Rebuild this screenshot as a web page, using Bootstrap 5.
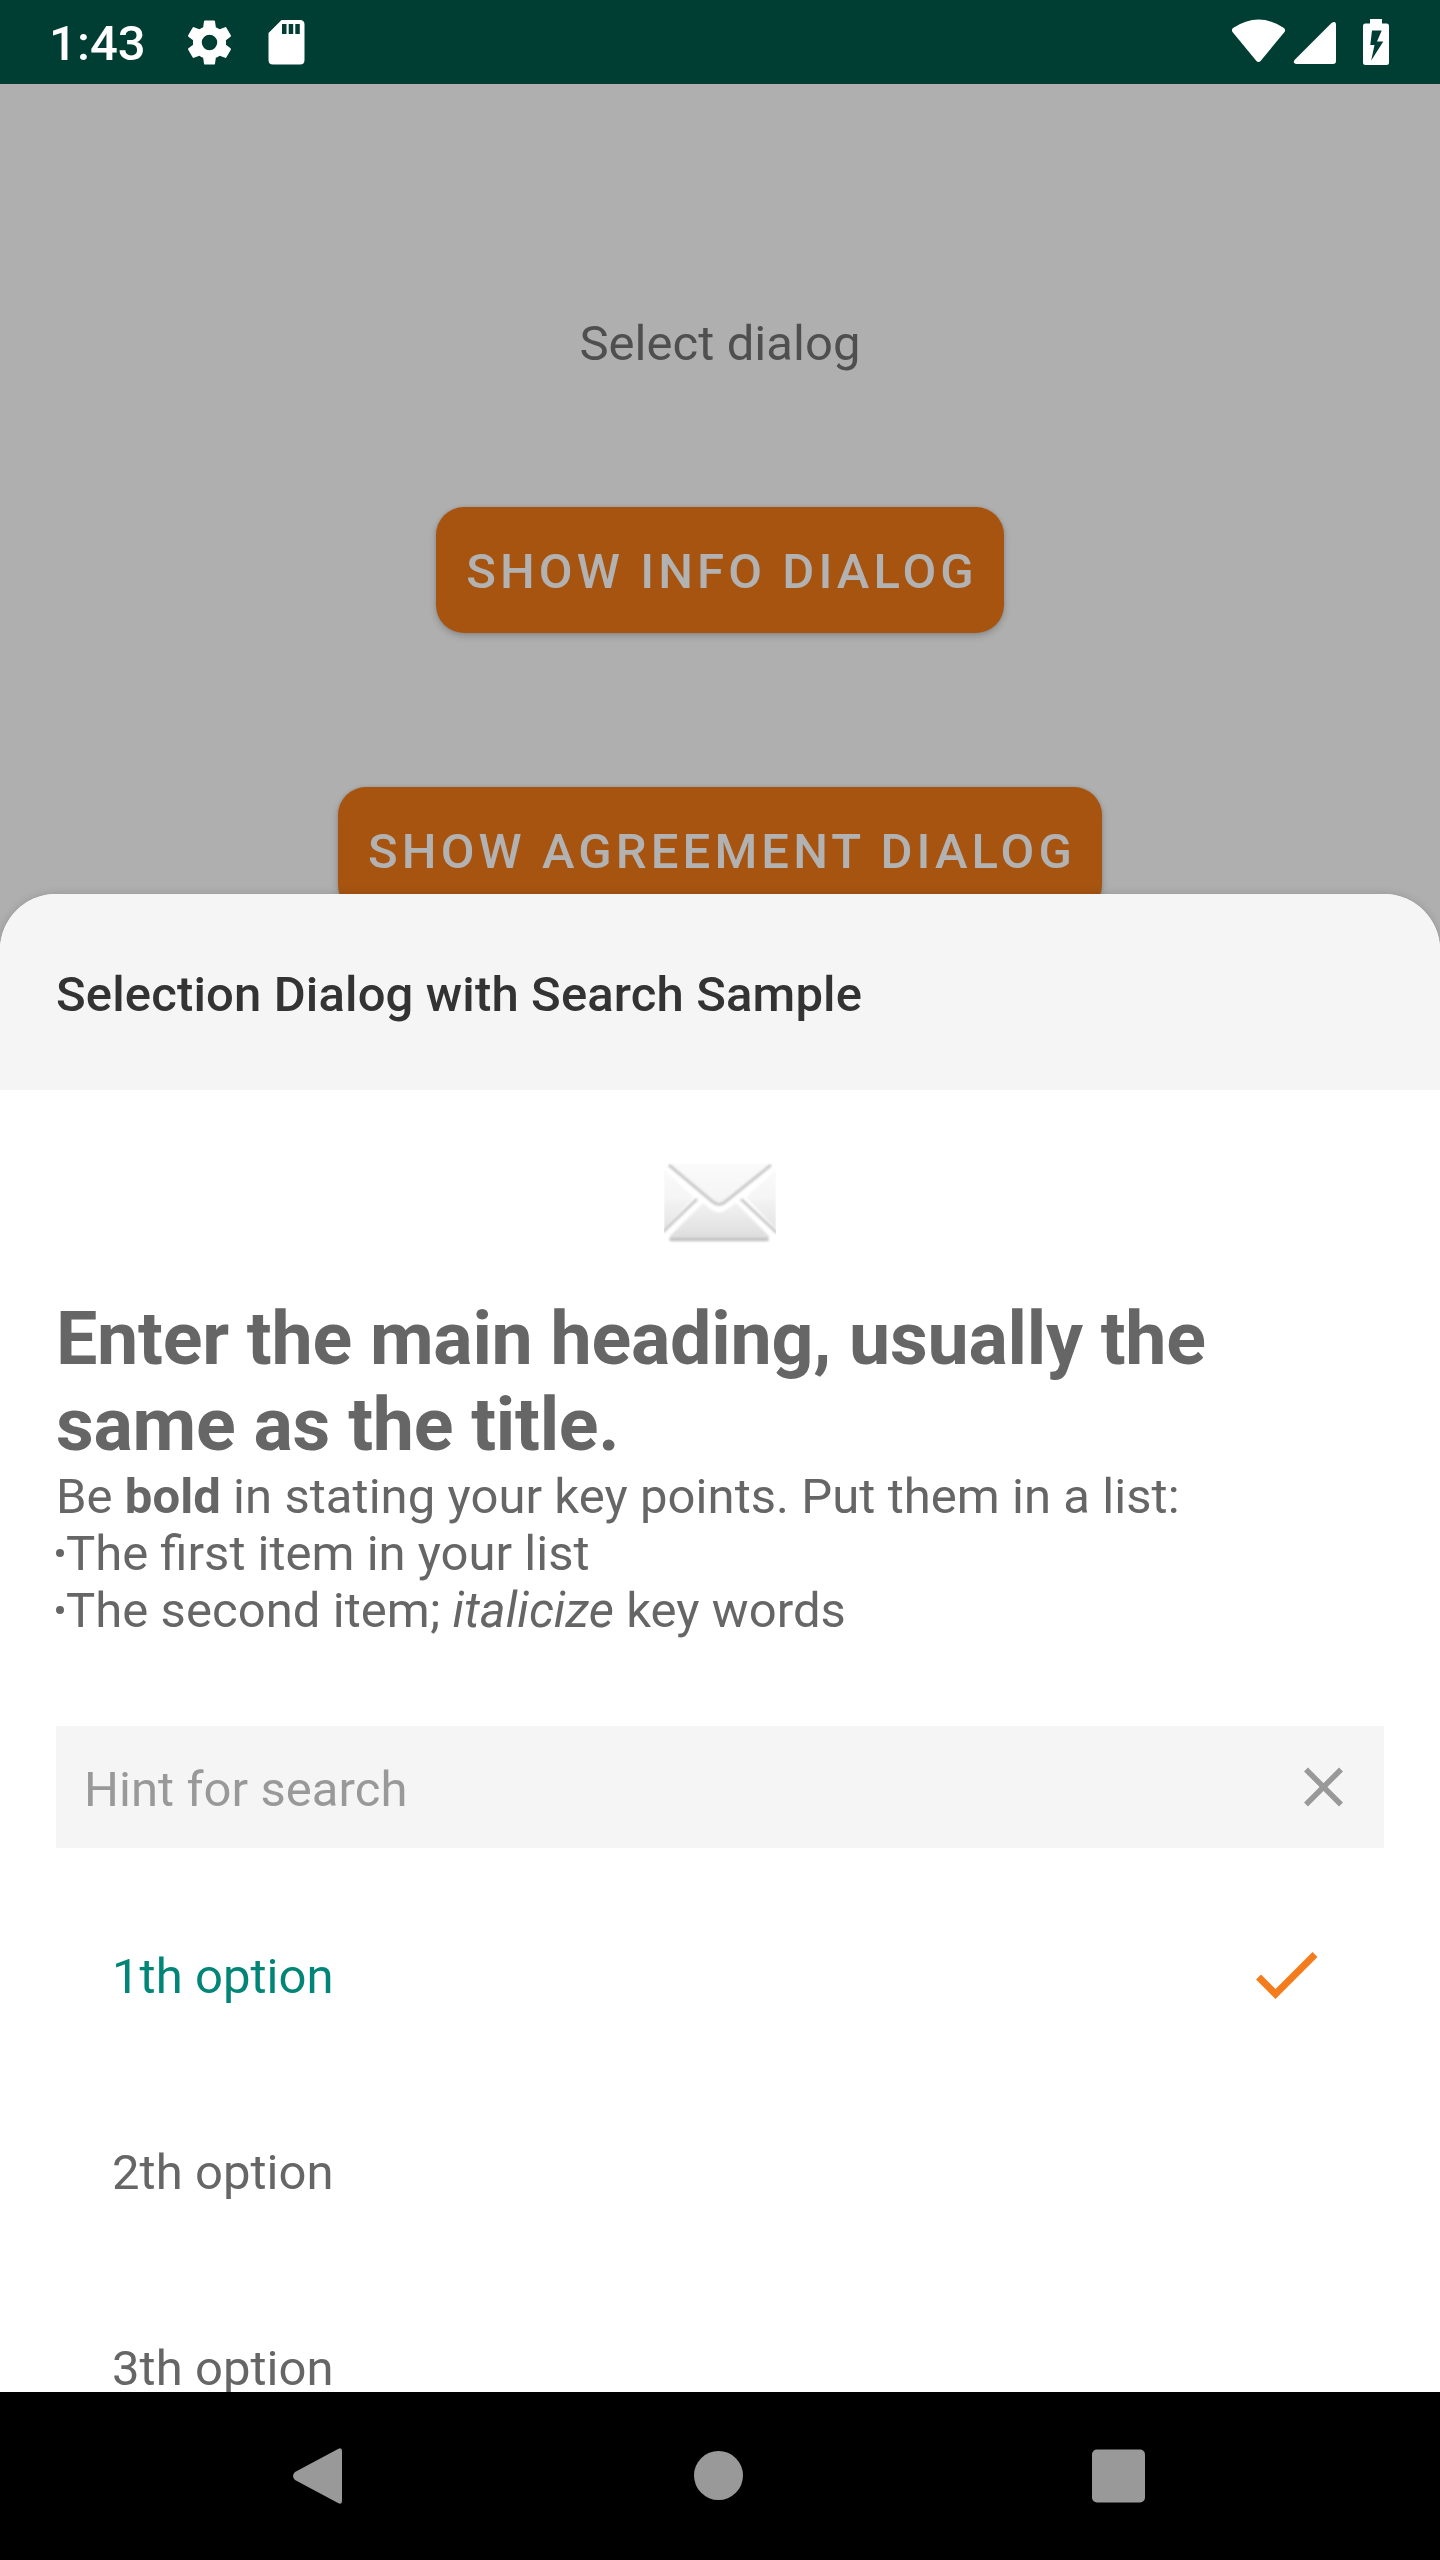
<!DOCTYPE html>
<html lang="en">
<head>
<meta charset="utf-8">
<meta name="viewport" content="width=device-width, initial-scale=1">
<title>Selection Dialog with Search Sample</title>
<link rel="stylesheet" href="https://cdn.jsdelivr.net/npm/bootstrap@5.3.0/dist/css/bootstrap.min.css">
<style>
  body { font-family: Roboto, "Liberation Sans", sans-serif; font-size: 49px; line-height: 57px; letter-spacing: .06px; color: #666; background: #afafaf; }
  svg { display: block; flex: none; }
  .screen { width: 1440px; height: 2560px; }
  .status-bar { height: 84px; background: #003d33; color: #fff; font-weight: 500; padding: 0 51px 0 49px; }
  .clock { padding-top: 3px; width: 134px; }
  .sd-icon { margin-left: 28px; }
  .backdrop-page { padding-top: 231px; color: #4f4f4f; gap: 135px; }
  .dimmed-actions { gap: 154px; }
  .btn-dim { --bs-btn-padding-y: 0; --bs-btn-font-size: 49px; --bs-btn-font-weight: 500; --bs-btn-line-height: 57px;
    --bs-btn-color: #b2b2b2; --bs-btn-bg: #a75411; --bs-btn-border-width: 0; --bs-btn-border-radius: 28px;
    height: 126px; padding: 3px 26px 0 30px; letter-spacing: 4.11px; box-shadow: 0 3px 7px rgba(0,0,0,.2), 0 0 3px rgba(0,0,0,.1); }
  .sheet { height: 1498px; bottom: 168px; border-radius: 56px 56px 0 0; box-shadow: 0 0 8px rgba(0,0,0,.15); }
  .sheet-title { height: 196px; padding: 4px 56px 0; background: #f5f5f5; color: #333; font-weight: 500; font-size: 49px; line-height: 57px; letter-spacing: .14px; }
  .sheet-body { padding: 71px 56px 0; }
  .message { margin-top: 51px; }
  .message h1 { font-size: 73.5px; line-height: 86px; font-weight: 700; letter-spacing: -.24px; }
  .ligatures { letter-spacing: normal; }
  .bullet-dot { display: inline-block; width: 8px; height: 8px; margin: 0 2px 13px 0; background: currentColor; vertical-align: baseline; }
  .search-box { margin-top: 87px; height: 122px; background: #f5f5f5; color: #999; padding: 4px 41px 0 28px; }
  .options { margin-top: 30px; --bs-list-group-color: #666; --bs-list-group-bg: #fff; --bs-list-group-border-width: 0; --bs-list-group-item-padding-x: 56px; --bs-list-group-item-padding-y: 0; }
  .options .list-group-item { height: 196px; padding-right: 66px; }
  .options .chosen { color: #018577; }
  .nav-keys { height: 168px; bottom: 0; padding: 0 295px 0 293px; }
</style>
</head>
<body>
<div class="screen position-relative overflow-hidden">
  <header class="status-bar d-flex align-items-center">
    <span class="clock">1:43</span>
    <svg width="53" height="53" viewBox="0 0 24 24" fill="#fff"><path d="M19.43 12.98c.04-.32.07-.64.07-.98s-.03-.66-.07-.98l2.11-1.65c.19-.15.24-.42.12-.64l-2-3.46c-.12-.22-.39-.3-.61-.22l-2.49 1c-.52-.4-1.08-.73-1.69-.98l-.38-2.65C14.46 2.18 14.25 2 14 2h-4c-.25 0-.46.18-.49.42l-.38 2.65c-.61.25-1.17.59-1.69.98l-2.49-1c-.23-.09-.49 0-.61.22l-2 3.46c-.13.22-.07.49.12.64l2.11 1.65c-.04.32-.07.65-.07.98s.03.66.07.98l-2.11 1.65c-.19.15-.24.42-.12.64l2 3.46c.12.22.39.3.61.22l2.49-1c.52.4 1.08.73 1.69.98l.38 2.65c.03.24.24.42.49.42h4c.25 0 .46-.18.49-.42l.38-2.65c.61-.25 1.17-.59 1.69-.98l2.49 1c.23.09.49 0 .61-.22l2-3.46c.12-.22.07-.49-.12-.64l-2.11-1.65zM12 15.500a3.500 3.500 0 1 1 0-7 3.500 3.500 0 0 1 0 7z"/></svg>
    <svg class="sd-icon" width="46" height="84" viewBox="264 0 46 84" fill="#fff"><path fill-rule="evenodd" d="M281.500 20H300q4.500 0 4.500 4.500V60q0 4.500-4.500 4.500H273q-4.500 0-4.500-4.500V33zM282 24v10h4.500V24zm6.700 0v10h4.500V24zm6.600 0v10h4.500V24z"/></svg>
    <svg class="ms-auto" width="157" height="84" viewBox="1232 0 157 84" fill="#fff">
      <path d="M1233 28q25.500-17 51 0q2 2 .5 4L1261 60.500q-2.500 3-5 0L1232.500 32q-1.500-2 .5-4z"/>
      <path d="M1295 59.500L1331.500 23q4.500-3 4.500 2V61q0 3-3 3H1296q-4-1-1-4.500z"/>
      <path fill-rule="evenodd" d="M1370 19h12v4.500h4.500q2.500 0 2.500 2.500V62.500q0 2.500-2.500 2.500H1365.500q-2.500 0-2.500-2.500V26q0-2.500 2.500-2.500h4.500zM1372 30.500l-1.700 14.500h4.200l-3.300 15.500L1383.300 41.500h-6.300l4.700-11z"/>
    </svg>
  </header>

  <main class="backdrop-page d-flex flex-column align-items-center">
    <div>Select dialog</div>
    <div class="dimmed-actions d-flex flex-column align-items-center">
      <button type="button" class="btn btn-dim">SHOW INFO DIALOG</button>
      <button type="button" class="btn btn-dim">SHOW AGREEMENT DIALOG</button>
    </div>
  </main>

  <section class="sheet position-absolute start-0 w-100 bg-white overflow-hidden" role="dialog">
    <h2 class="sheet-title d-flex align-items-center m-0">Selection Dialog with Search Sample</h2>
    <div class="sheet-body">
      <svg class="mx-auto" width="112" height="84" viewBox="0 0 112 84">
        <defs>
          <linearGradient id="paper" gradientUnits="userSpaceOnUse" x1="0" y1="4" x2="0" y2="80"><stop offset="0" stop-color="#fafafa"/><stop offset=".4" stop-color="#f6f6f6"/><stop offset="1" stop-color="#dcdcdc"/></linearGradient>
          <filter id="soft" x="-5%" y="-5%" width="110%" height="110%"><feGaussianBlur stdDeviation=".8"/></filter>
        </defs>
        <g filter="url(#soft)">
          <path fill="url(#paper)" d="M6 3H106L61 41Q55 46 49 41z"/>
          <path fill="url(#paper)" d="M0 9L30 36 0 68zM112 9L82 36 112 68z"/>
          <path fill="url(#paper)" d="M6 75L39 42 48 49Q55 54 62 49L72 42 105 75V77H6z"/>
          <path fill="none" stroke="#c9c9c9" stroke-width="3" d="M5 4L49 41Q55 46 61 41L107 4M-1 71L33 38M113 72L77 38"/>
          <path stroke="#c2c2c2" stroke-width="3.500" stroke-linecap="round" d="M7 78.500H103"/>
        </g>
      </svg>
      <div class="message">
        <h1 class="m-0">Enter the main heading, usually the<br>same as the title.</h1>
        <div>Be <b>bold</b> in stating your key points. Put them in a list:</div>
        <div class="ligatures"><span class="bullet-dot rounded-circle"></span>The first item in your list</div>
        <div><span class="bullet-dot rounded-circle"></span>The second item; <i>italicize</i> key words</div>
      </div>
      <div class="search-box d-flex align-items-center justify-content-between">
        <span>Hint for search</span>
        <svg width="39" height="44" viewBox="0 0 39 44"><path d="M2 2.500L37 37.500M37 2.500L2 37.500" stroke="#999" stroke-width="5.500"/></svg>
      </div>
      <div class="options list-group list-group-flush">
        <div class="list-group-item chosen d-flex align-items-center justify-content-between">1th option
          <svg width="62" height="48" viewBox="0 0 62 48"><path d="M2.500 25L19.500 42 59 2.500" fill="none" stroke="#f57c1c" stroke-width="7"/></svg>
        </div>
        <div class="list-group-item d-flex align-items-center">2th option</div>
        <div class="list-group-item d-flex align-items-center">3th option</div>
      </div>
    </div>
  </section>

  <nav class="nav-keys position-absolute start-0 w-100 bg-black d-flex align-items-center justify-content-between">
    <svg width="50" height="56" viewBox="0 0 50 56" fill="#999"><path d="M2 24L45 1q4-2 4 2V53q0 4-4 2L2 32q-4-4 0-8z"/></svg>
    <svg width="50" height="50" viewBox="0 0 50 50" fill="#999"><circle cx="25.500" cy="24.500" r="24.500"/></svg>
    <svg width="53" height="54" viewBox="0 0 53 54" fill="#999"><rect y=".5" width="53" height="53" rx="5"/></svg>
  </nav>
</div>
<script src="https://cdn.jsdelivr.net/npm/bootstrap@5.3.0/dist/js/bootstrap.bundle.min.js"></script>
</body>
</html>
